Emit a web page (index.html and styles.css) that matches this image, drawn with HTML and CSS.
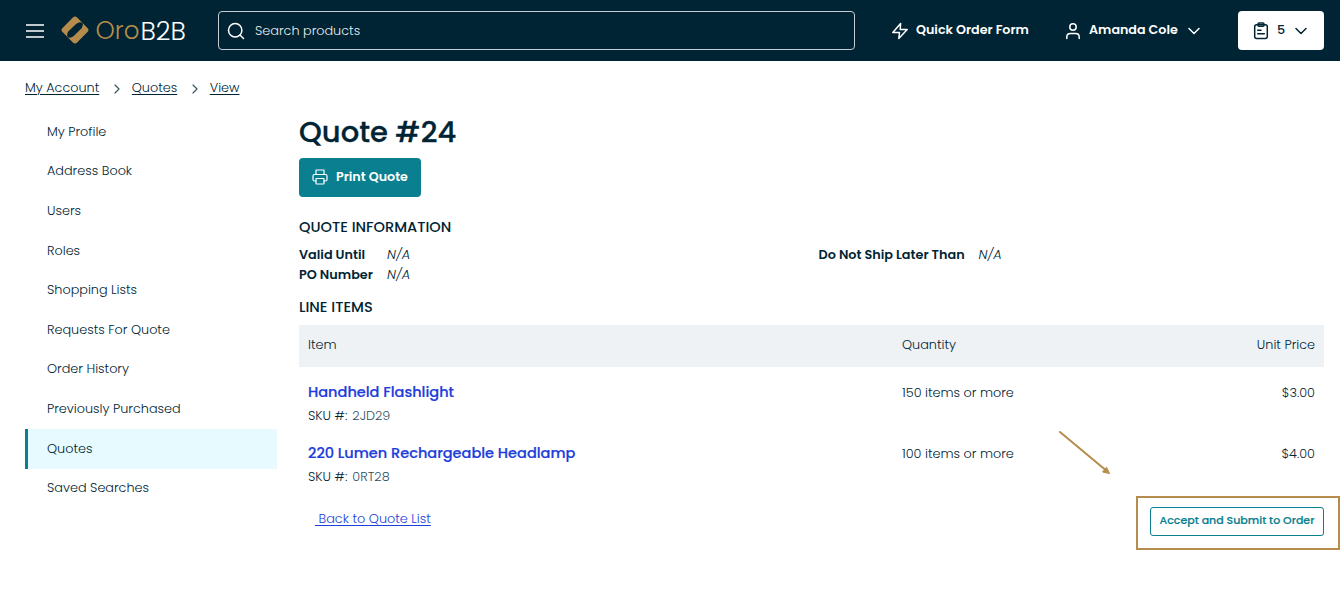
FILE: index.html
```html
<!DOCTYPE html>
<html lang="en">
<head>
<meta charset="utf-8">
<title>Quote #24</title>
<link rel="stylesheet" href="styles.css">
</head>
<body>
<header class="header">
  <svg class="burger" width="18" height="14" viewBox="0 0 18 14"><path d="M0 1h18M0 7h18M0 13h18"/></svg>
  <a class="logo">
    <svg class="logo-mark" width="30" height="30" viewBox="0 0 30 30"><rect x="4.7" y="4.7" width="20.6" height="20.6" rx="3" transform="rotate(45 15 15)"/><path class="slot" d="M8 16.800L15.800 9.200Q18 7.200 20.500 7.200Q23.200 7.500 22.800 10Q22.500 12 21.600 13.200L14 20.800Q12 22.800 9.500 22.800Q6.800 22.500 7.200 20Q7.200 18 8 16.800Z"/></svg>
    <span class="logo-oro">Oro</span><span class="logo-b2b">B2B</span>
  </a>
  <div class="search">
    <svg width="18" height="18" viewBox="0 0 18 18"><circle cx="8.200" cy="8.200" r="6.700"/><path d="M13 13l3.500 3.500"/></svg>
    <span class="search-text">Search products</span>
  </div>
  <a class="nav-link quick">
    <svg width="18" height="18" viewBox="0 0 18 18"><path d="M9.600 1.500L1.800 10.500H8.500L7.800 16.500L16.200 7.500H9.200Z"/></svg>
    <span>Quick Order Form</span>
  </a>
  <a class="nav-link user">
    <svg width="16" height="18" viewBox="0 0 16 18"><circle cx="8" cy="5" r="3.200"/><path d="M1.800 16.500V15Q1.800 11.500 5.300 11.500H10.700Q14.200 11.500 14.200 15V16.500"/></svg>
    <span>Amanda Cole</span>
    <svg class="chevron" width="12" height="8" viewBox="0 0 12 8"><path d="M1 1.500L6 6.500L11 1.500"/></svg>
  </a>
  <a class="cart">
    <svg width="16" height="18" viewBox="0 0 16 18"><rect x="1.700" y="2.700" width="12.600" height="13.800" rx="2"/><rect x="5" y="1" width="6" height="3.300" rx="1"/><path d="M4.700 8.300H8M4.700 11.800H11.300"/></svg>
    <span class="cart-count">5</span>
    <svg class="chevron" width="12" height="8" viewBox="0 0 12 8"><path d="M1 1.500L6 6.500L11 1.500"/></svg>
  </a>
</header>

<nav class="breadcrumbs">
  <a>My Account</a>
  <svg width="6" height="10" viewBox="0 0 6 10"><path d="M1 1l4 4l-4 4"/></svg>
  <a>Quotes</a>
  <svg width="6" height="10" viewBox="0 0 6 10"><path d="M1 1l4 4l-4 4"/></svg>
  <a>View</a>
</nav>

<div class="page">
  <aside class="menu">
    <a class="menu-item">My Profile</a>
    <a class="menu-item">Address Book</a>
    <a class="menu-item">Users</a>
    <a class="menu-item">Roles</a>
    <a class="menu-item">Shopping Lists</a>
    <a class="menu-item">Requests For Quote</a>
    <a class="menu-item">Order History</a>
    <a class="menu-item">Previously Purchased</a>
    <a class="menu-item active">Quotes</a>
    <a class="menu-item">Saved Searches</a>
  </aside>

  <main class="content">
    <h1 class="title">Quote #24</h1>
    <a class="print">
      <svg width="16" height="16" viewBox="0 0 16 16"><path d="M4 5.500V1H12V5.500M4 12H2.500Q1 12 1 10.500V7Q1 5.500 2.500 5.500H13.500Q15 5.500 15 7V10.500Q15 12 13.500 12H12"/><rect x="4" y="9.500" width="8" height="5.500" rx=".5"/></svg>
      <span>Print Quote</span>
    </a>
    <h2 class="section">QUOTE INFORMATION</h2>
    <div class="info">
      <dl class="info-col left">
        <dt>Valid Until</dt><dd>N/A</dd>
        <dt>PO Number</dt><dd>N/A</dd>
      </dl>
      <dl class="info-col right">
        <dt>Do Not Ship Later Than</dt><dd>N/A</dd>
      </dl>
    </div>
    <h2 class="section">LINE ITEMS</h2>
    <div class="row head">
      <span>Item</span><span>Quantity</span><span>Unit Price</span>
    </div>
    <div class="row line">
      <div><a class="name">Handheld Flashlight</a><div class="sku"><span>SKU #:</span><span class="sku-code">2JD29</span></div></div>
      <span class="cell">150 items or more</span><span class="cell">$3.00</span>
    </div>
    <div class="row line">
      <div><a class="name">220 Lumen Rechargeable Headlamp</a><div class="sku"><span>SKU #:</span><span class="sku-code">0RT28</span></div></div>
      <span class="cell">100 items or more</span><span class="cell">$4.00</span>
    </div>
    <footer class="actions">
      <a class="back">&nbsp;Back to Quote List</a>
      <a class="accept">Accept and Submit to Order</a>
    </footer>
  </main>
</div>
<div class="highlight"></div>
<svg class="arrow" width="54" height="46" viewBox="0 0 54 46"><path class="shaft" d="M2 2L47 39.500"/><path class="tip" d="M51.300 43.500L44.600 42L48.300 37.500Z"/></svg>
</body>
</html>
```

FILE: styles.css
```css
* { box-sizing: border-box; }
body { margin: 0; width: 1340px; height: 596px; overflow: hidden; background: #fff; color: #002434; font: 300 12.8px/20px Poppins, Inter, "Open Sans", sans-serif; white-space: nowrap; }
svg { display: block; flex: none; fill: none; stroke: currentColor; stroke-width: 1.5; stroke-linecap: round; stroke-linejoin: round; }

.header { height: 61px; display: flex; align-items: center; background: #002434; color: #fff; padding: 0 16px 0 26px; }
.burger { stroke-linecap: butt; stroke-width: 1.7; }
.logo { display: flex; align-items: center; flex: none; margin-left: 16px; width: 158px; font-size: 25.7px; }
.logo-mark { stroke: none; fill: #b58c4b; margin: 0 5.5px 1px 0; }
.slot { fill: #002434; }
.logo-oro { color: #b58c4b; width: 45px; font-size: 24.5px; }
.search { display: flex; align-items: center; gap: 10px; flex: none; width: 637px; height: 39px; border: 1px solid #c3cdd2; border-radius: 4px; padding-left: 8px; }
.search-text { color: #e8ecee; }
.nav-link { display: flex; align-items: center; flex: none; font-size: 12.7px; font-weight: 600; padding-bottom: 1px; }
.nav-link svg { margin-top: 1px; }
.quick { margin-left: 36px; width: 174px; gap: 7px; }
.user { width: 173px; gap: 8px; }
.user .chevron { margin-left: 2px; }
.cart { display: flex; align-items: center; flex: none; width: 86px; height: 39px; border-radius: 4px; background: #fff; color: #002434; padding-left: 15px; }
.cart-count { width: 8px; margin: 0 10px 1px 8px; font-weight: 500; }

.breadcrumbs { display: flex; align-items: center; height: 53px; padding: 0 25px; margin-bottom: -2px; }
.breadcrumbs svg { stroke-width: 1.2; color: #3c5764; margin: 2px 11.5px 0 15px; }
.breadcrumbs a { text-decoration: underline; text-underline-offset: 2px; }

.page { display: flex; gap: 22px; padding: 0 16px 0 25px; }
.menu { width: 252px; padding-top: 0.2px; }
.menu-item { display: flex; align-items: center; height: 39.6px; padding: 0 0 0.4px 19px; border-left: 3px solid transparent; }
.menu-item.active { background: #e6faff; border-color: #0a7f8f; }

.content { width: 1025px; }
.title { margin: 0; font-size: 29px; font-weight: 500; line-height: 40px; height: 46px; -webkit-text-stroke: 0.3px currentColor; }
.print { display: flex; align-items: center; gap: 8px; width: 122px; height: 39px; padding: 0 0 1px 13px; border-radius: 4px; background: #0a7f8f; color: #fff; font-size: 12.7px; font-weight: 600; }
.print svg { stroke-width: 1.2; }
.section { margin: 0; font-size: 14.6px; font-weight: 500; line-height: 20px; }
.print + .section { margin-top: 20px; }
.info { display: flex; margin: 8px 0 12px; height: 40px; }
.info-col { display: grid; grid-template-rows: 20px 20px; margin: 0; flex: none; width: 519.5px; }
.left { grid-template-columns: 88px 1fr; }
.right { grid-template-columns: 160px 1fr; }
.info dt { font-weight: 600; }
.info dd { margin: 0; font-size: 13px; font-style: italic; }
.row { display: grid; grid-template-columns: 594px 1fr auto; padding: 0 9px; }
.head { height: 42px; margin-top: 8px; padding-top: 10px; background: #eef2f5; }
.line { height: 61px; padding-top: 15px; }
.name { display: block; color: #1d3edb; font-size: 14.54px; font-weight: 500; line-height: 20px; -webkit-text-stroke: 0.2px currentColor; }
.sku { display: flex; gap: 5px; margin-top: 4px; }
.sku-code { color: #305060; }
.cell { padding-top: 1px; }
.actions { display: flex; justify-content: space-between; padding: 18px 0 0 16px; }
.back { color: #1d3edb; margin-top: 2px; height: 20px; font-size: 12.85px; text-decoration: underline; text-underline-offset: 2px; }
.accept { display: flex; align-items: center; justify-content: center; width: 174px; height: 29px; padding-bottom: 3px; border: 1px solid #0a7f8f; border-radius: 3px; color: #0a7f8f; font-size: 11px; font-weight: 500; -webkit-text-stroke: 0.2px currentColor; }

.highlight { position: absolute; left: 1136px; top: 496px; width: 204px; height: 54px; border: 2px solid #b58c4b; }
.arrow { position: absolute; left: 1058px; top: 430px; color: #b58c4b; }
.shaft { stroke-width: 2; }
.tip { fill: #b58c4b; stroke-width: 1; }
```
